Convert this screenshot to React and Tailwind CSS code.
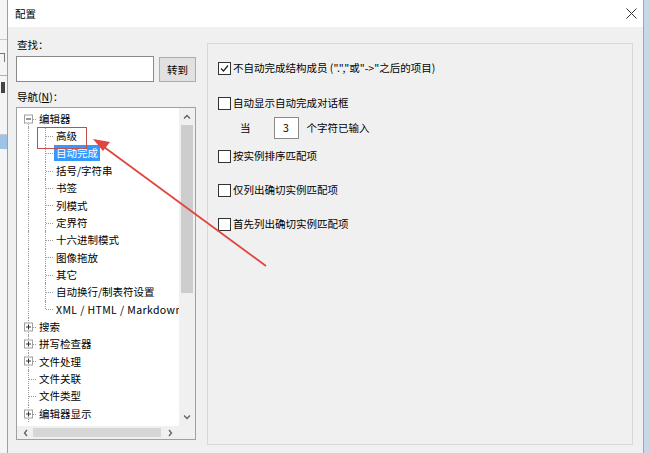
import React from "react";

const FONT = { fontFamily: '"Noto Sans CJK SC", "Noto Sans", "Liberation Sans", sans-serif' };

function Checkbox({ checked }) {
  return (
    <span className="relative inline-block w-[13px] h-[13px] border border-[#333333] bg-white shrink-0">
      {checked && (
        <svg className="absolute left-[1px] top-[1px]" width="9" height="9" viewBox="0 0 9 9">
          <path d="M1 4.5 L3.5 7 L8 1.5" fill="none" stroke="#222" strokeWidth="1.2" />
        </svg>
      )}
    </span>
  );
}

function Expander({ plus }) {
  return (
    <span className="absolute left-[7px] top-1/2 -translate-y-1/2 w-[9px] h-[9px] border border-[#a0a0a0] bg-white flex items-center justify-center">
      <svg width="7" height="7" viewBox="0 0 7 7">
        <path d="M1 3.5 H6" stroke="#333" strokeWidth="1" />
        {plus && <path d="M3.5 1 V6" stroke="#333" strokeWidth="1" />}
      </svg>
    </span>
  );
}

function RootCell({ box, plus, first, dash = true }) {
  return (
    <div className="relative w-[20px] h-full shrink-0">
      <span className={`absolute left-[11px] ${first ? "top-1/2" : "top-0"} bottom-0 border-l border-dotted border-[#9a9a9a]`} />
      {dash && <span className="absolute left-[12px] top-1/2 w-[7px] border-t border-dotted border-[#9a9a9a]" />}
      {box && <Expander plus={plus} />}
    </div>
  );
}

function ChildCell({ last }) {
  return (
    <div className="relative w-[17px] h-full shrink-0">
      <span className={`absolute left-[8px] top-0 ${last ? "h-1/2" : "bottom-0"} border-l border-dotted border-[#9a9a9a]`} />
      <span className="absolute left-[9px] top-1/2 w-[7px] border-t border-dotted border-[#9a9a9a]" />
    </div>
  );
}

const children = [
  "高级",
  "自动完成",
  "括号/字符串",
  "书签",
  "列模式",
  "定界符",
  "十六进制模式",
  "图像拖放",
  "其它",
  "自动换行/制表符设置",
  "XML / HTML / Markdown",
];

const roots = [
  { t: "搜索", box: true },
  { t: "拼写检查器", box: true },
  { t: "文件处理", box: true },
  { t: "文件关联", box: false },
  { t: "文件类型", box: false },
  { t: "编辑器显示", box: true },
];

function Tree() {
  return (
    <div className="flex flex-col h-full">
      <div className="flex-1 flex min-h-0">
        <div className="flex-1 overflow-hidden pt-[2px] bg-white">
          <div className="flex items-center h-[17.35px]">
            <RootCell box first />
            <span className="px-[2px] whitespace-nowrap">编辑器</span>
          </div>
          {children.map((c, i) => (
            <div key={c} className="flex items-center h-[17.35px]">
              <RootCell dash={false} />
              <ChildCell last={i === children.length - 1} />
              <span
                className={`px-[2px] whitespace-nowrap ${i === 1 ? "bg-[#3399ff] text-white" : ""} ${
                  i === children.length - 1 ? "tracking-[0.4px]" : ""
                }`}
              >
                {c}
              </span>
            </div>
          ))}
          {roots.map((r) => (
            <div key={r.t} className="flex items-center h-[17.35px]">
              <RootCell box={r.box} plus />
              <span className="px-[2px] whitespace-nowrap">{r.t}</span>
            </div>
          ))}
        </div>
        <div className="w-[16px] bg-[#f0f0f0] flex flex-col items-center shrink-0">
          <div className="h-[17px] flex items-center justify-center">
            <svg width="8" height="5" viewBox="0 0 8 5">
              <path d="M1 4.5 L4 1.5 L7 4.5" fill="none" stroke="#606060" strokeWidth="1.3" />
            </svg>
          </div>
          <div className="w-full flex-1 px-[2px]">
            <div className="w-full h-[168px] bg-[#cdcdcd]" />
          </div>
          <div className="h-[17px] flex items-center justify-center">
            <svg width="8" height="5" viewBox="0 0 8 5">
              <path d="M1 0.5 L4 3.5 L7 0.5" fill="none" stroke="#606060" strokeWidth="1.3" />
            </svg>
          </div>
        </div>
      </div>
      <div className="h-[13px] flex shrink-0">
        <div className="flex-1 bg-[#f0f0f0] flex items-center">
          <div className="w-[16px] flex justify-center">
            <svg width="5" height="8" viewBox="0 0 5 8">
              <path d="M4 1 L1.5 4 L4 7" fill="none" stroke="#606060" strokeWidth="1.3" />
            </svg>
          </div>
          <div className="flex-1 h-[9px] bg-[#d6d6d6]" />
          <div className="w-[18px] flex justify-center">
            <svg width="5" height="8" viewBox="0 0 5 8">
              <path d="M1 1 L3.5 4 L1 7" fill="none" stroke="#606060" strokeWidth="1.3" />
            </svg>
          </div>
        </div>
        <div className="w-[16px] bg-[#f0f0f0]" />
      </div>
    </div>
  );
}

export default function App() {
  return (
    <div className="relative w-[650px] h-[453px] flex overflow-hidden text-[10.5px] text-black" style={FONT}>
      {/* background app left strip */}
      <div className="w-[8px] h-full bg-[#f4f5f7] flex flex-col border-r border-[#8ea3b8] shrink-0">
        <div className="h-[40px] border-b border-[#c8c8c8]" />
        <div className="h-[36px] border-b border-[#b0b0b0] flex items-center">
          <div className="w-[5px] h-[9px] border-t border-r border-[#777]" />
        </div>
        <div className="h-[22px] flex items-center">
          <div className="w-[4px] h-[11px] bg-[#444] ml-[1px]" />
        </div>
        <div className="h-[37px] border-b border-[#c8c8c8]" />
        <div className="h-[14px] bg-[#9fc3e6]" />
        <div className="flex-1" />
      </div>

      {/* dialog */}
      <div className="flex-1 h-full flex flex-col bg-[#f0f0f0]">
        <div className="h-[27px] bg-white flex items-center justify-between pl-[7px] pr-[6px] shrink-0">
          <span>配置</span>
          <svg width="11" height="11" viewBox="0 0 11 11">
            <path d="M0.5 0.5 L10.5 10.5 M10.5 0.5 L0.5 10.5" stroke="#333" strokeWidth="1" />
          </svg>
        </div>
        <div className="flex-1 flex pl-[8px] pr-[10px] pt-[10px] pb-[8px]">
          <div className="w-[180px] flex flex-col shrink-0">
            <div className="h-[16px] leading-[16px] pl-[1px]">查找：</div>
            <div className="flex mt-[3px] h-[26px] items-stretch">
              <div className="w-[138px] border border-[#8a8a8a] bg-white" />
              <div className="ml-[5px] flex-1 border border-[#adadad] bg-[#e1e1e1] flex items-center justify-center mt-[1px]">
                转到
              </div>
            </div>
            <div className="h-[16px] leading-[16px] mt-[7px] pl-[1px]">
              导航(<span className="underline">N</span>)：
            </div>
            <div className="mt-[2px] h-[333px] border border-[#a0a0a0] bg-white">
              <Tree />
            </div>
          </div>

          <div className="flex-1 ml-[11px] border border-[#d8d8d8] mt-[6px] pt-[16px] pl-[10px]">
            <div className="flex items-center gap-[2px] h-[16px]">
              <Checkbox checked />
              <span>不自动完成结构成员 (".","或"-&gt;"之后的项目)</span>
            </div>
            <div className="flex items-center gap-[2px] h-[16px] mt-[19px]">
              <Checkbox />
              <span>自动显示自动完成对话框</span>
            </div>
            <div className="flex items-center h-[22px] mt-[6px] pl-[22px]">
              <span>当</span>
              <div className="ml-[23px] w-[25px] h-[22px] border border-[#8a8a8a] bg-white flex items-center justify-center">3</div>
              <span className="ml-[8px]">个字符已输入</span>
            </div>
            <div className="flex items-center gap-[2px] h-[16px] mt-[9px]">
              <Checkbox />
              <span>按实例排序匹配项</span>
            </div>
            <div className="flex items-center gap-[2px] h-[16px] mt-[18px]">
              <Checkbox />
              <span>仅列出确切实例匹配项</span>
            </div>
            <div className="flex items-center gap-[2px] h-[16px] mt-[18px]">
              <Checkbox />
              <span>首先列出确切实例匹配项</span>
            </div>
          </div>
        </div>
      </div>

      {/* background app right strip */}
      <div className="w-[7px] h-full bg-[#c9d8e6] border-l border-[#9aaaba] shrink-0" />

      {/* annotation overlay */}
      <svg className="absolute inset-0 pointer-events-none" width="650" height="453" viewBox="0 0 650 453">
        <rect x="37.5" y="127.5" width="49" height="21" fill="none" stroke="#c0504d" strokeWidth="1" />
        <line x1="266" y1="266" x2="104" y2="147" stroke="#e0453f" strokeWidth="1.8" />
        <path d="M93 139 L110 142 L103 151 Z" fill="#e0453f" />
      </svg>
    </div>
  );
}
